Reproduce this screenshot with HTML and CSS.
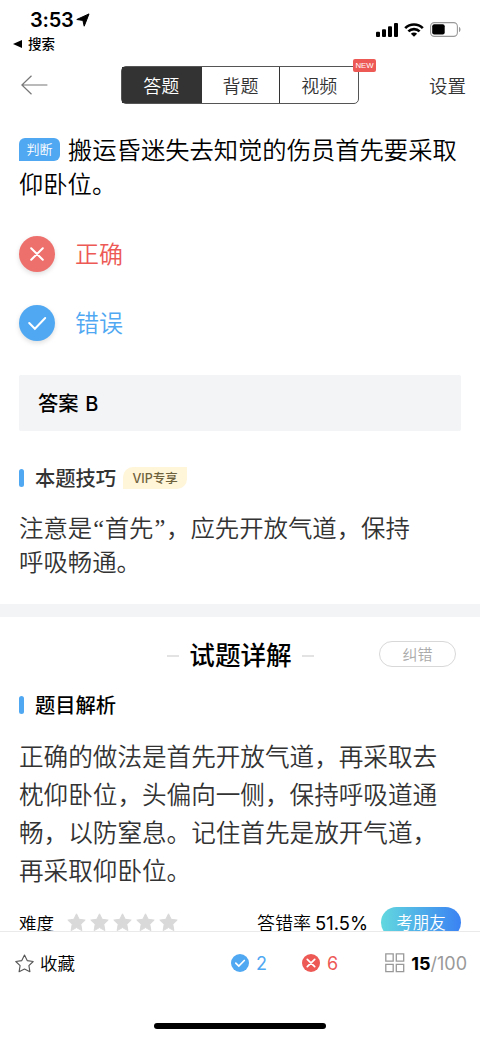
FILE: index.html
```html
<!DOCTYPE html>
<html lang="zh-CN">
<head>
<meta charset="utf-8">
<meta name="viewport" content="width=device-width, initial-scale=1">
<title>答题</title>
<link rel="stylesheet" href="styles.css">
</head>
<body>
<div class="app">
  <div class="status">
    <div class="status-left">
      <div class="clock"><span>3:53</span><svg class="location" width="14" height="14" viewBox="0 0 14 14"><path d="M13 .9 8.200 13.200 6.900 7.400.8 6.500z" stroke="#000" stroke-linejoin="round"/></svg></div>
      <div class="back-app"><svg width="9" height="8" viewBox="0 0 9 8"><path d="M0 4 9 0v8z"/></svg><span>搜索</span></div>
    </div>
    <div class="status-right">
      <svg width="22" height="14" viewBox="0 0 22 14"><rect y="8.8" width="4" height="5.2" rx="1"/><rect x="6" y="6.3" width="4" height="7.7" rx="1"/><rect x="12" y="3.2" width="4" height="10.8" rx="1"/><rect x="18" width="4" height="14" rx="1"/></svg>
      <svg width="20" height="14" viewBox="0 0 20 14"><path d="M1.2 5.1a12.6 12.6 0 0 1 17.6 0M4.4 8.4a8 8 0 0 1 11.2 0" fill="none" stroke="#000" stroke-width="2.7"/><path d="M10 13.8 6.9 10.8a4.4 4.4 0 0 1 6.2 0z"/></svg>
      <svg width="31" height="15" viewBox="0 0 31 15"><rect x=".6" y=".6" width="26.8" height="13.8" rx="3.8" fill="none" stroke="#999" stroke-width="1.1"/><rect x="2.2" y="2.3" width="12.5" height="10.2" rx="2"/><path d="M29 5c2 .6 2 4.400 0 5z" fill="#999"/></svg>
    </div>
  </div>

  <header class="nav">
    <svg class="back" width="28" height="20" viewBox="0 0 28 20"><path d="M10.500.8.9 10l9.600 9.200M.9 10h25.500"/></svg>
    <div class="tabs">
      <span class="tab active">答题</span><span class="tab">背题</span><span class="tab">视频</span>
      <span class="new">NEW</span>
    </div>
    <span class="settings">设置</span>
  </header>

  <main class="content">
    <section class="question">
      <span class="kind">判断</span>搬运昏迷失去知觉的伤员首先要采取<br>仰卧位。
    </section>
    <div class="option wrong">
      <span class="disc"><svg width="36" height="36" viewBox="0 0 36 36"><path d="m12.200 12.200 11.600 11.600m0-11.600L12.200 23.800"/></svg></span><span class="choice">正确</span>
    </div>
    <div class="option right">
      <span class="disc"><svg width="36" height="36" viewBox="0 0 36 36"><path d="m10.200 18 5.700 5.700L26.200 13"/></svg></span><span class="choice">错误</span>
    </div>
    <div class="answer">答案 <span>B</span></div>
    <h3 class="label tip-label"><i></i><span>本题技巧</span><span class="vip">VIP专享</span></h3>
    <p class="tip">注意是<span class="quote">“</span>首先<span class="quote">”</span>，应先开放气道，保持<br>呼吸畅通。</p>
    <div class="divider"></div>
    <div class="detail-head"><h2><i></i><span>试题详解</span><i></i></h2><button class="report">纠错</button></div>
    <h3 class="label dark"><i></i><span>题目解析</span></h3>
    <p class="analysis">正确的做法是首先开放气道，再采取去<br>枕仰卧位，头偏向一侧，保持呼吸道通<br>畅，以防窒息。记住首先是放开气道，<br>再采取仰卧位。</p>
    <div class="stats">
      <span class="difficulty">难度</span>
      <svg class="stars" width="112" height="20" viewBox="0 0 112 20">
        <defs><path id="star" d="m9.500.8 2.700 5.500 6 .8-4.400 4.200 1.100 6.300-5.400-3-5.400 3 1.100-6.300L.8 7.100l6-.8z" stroke="#d9d9d9" stroke-linejoin="round"/></defs>
        <use href="#star"/><use href="#star" x="23"/><use href="#star" x="46"/><use href="#star" x="69"/><use href="#star" x="92"/>
      </svg>
      <span class="rate">答错率 <b>51.5%</b></span>
      <span class="friends">考朋友</span>
    </div>
  </main>

  <footer class="bottom">
    <div class="toolbar">
      <svg class="fav-icon" width="19" height="19" viewBox="0 0 19 19"><path d="m9.500 1.100 2.700 5.500 6 .9-4.300 4.200 1 6-5.400-2.700-5.400 2.700 1-6L.8 7.500l6-.9z"/></svg>
      <span class="fav">收藏</span>
      <svg class="count-icon" width="18" height="18" viewBox="0 0 18 18"><circle cx="9" cy="9" r="9" fill="#50a8f2"/><path d="m4.800 9.100 3 3 5.500-5.600"/></svg>
      <span class="count blue">2</span>
      <svg class="count-icon" width="18" height="18" viewBox="0 0 18 18"><circle cx="9" cy="9" r="9" fill="#ed5a56"/><path d="m5.300 5.300 7.400 7.400m0-7.400-7.400 7.400"/></svg>
      <span class="count red">6</span>
      <svg class="grid-icon" width="20" height="20" viewBox="0 0 20 20"><path d="M.8.800h7.400v7.400H.8zM11.300.800h7.400v7.400h-7.400zM.8 11.300h7.400v7.400H.8zM11.300 11.300h7.400v7.400h-7.400z"/></svg>
      <span class="progress"><b>15</b>/100</span>
    </div>
    <div class="home"></div>
  </footer>
</div>
</body>
</html>
```

FILE: styles.css
```css
* { box-sizing: border-box; }
body { margin: 0; background: #fff; color: #000; font-family: "Noto Sans CJK SC", sans-serif; font-weight: 350; }
h2, h3, p { margin: 0; }
svg { display: block; flex: none; }
.app { width: 480px; height: 1039px; display: flex; flex-direction: column; overflow: hidden; white-space: nowrap; }
.status { height: 56px; flex: none; display: flex; justify-content: space-between; padding: 9px 19px 0 13px; }
.clock { display: flex; align-items: center; gap: 4px; height: 23px; padding-left: 17px; font: 600 20px/23px Inter, sans-serif; }
.clock span { width: 42px; letter-spacing: -.2px; }
.location { margin-bottom: 2px; }
.back-app { display: flex; align-items: center; gap: 6px; height: 23px; font-size: 13.500px; font-weight: 500; line-height: 23px; }
.status-right { display: flex; align-items: center; height: 15px; margin-top: 13px; gap: 6px; }
.nav { height: 55px; flex: none; display: flex; align-items: center; padding: 2px 14px 0 21px; }
.back { fill: none; stroke: #777; stroke-width: 1.200; }
.tabs { position: relative; display: flex; width: 238px; height: 38px; margin-left: 72px; border: 1.500px solid #555; border-radius: 5px; }
.tab { width: 79px; font-size: 18px; line-height: 36px; text-align: center; color: #333; }
.tab + .tab { border-left: 1px solid #333; }
.tab.active { width: 79px; background: #333; color: #fff; }
.new { position: absolute; right: -18px; top: -8px; width: 23px; height: 13px; border-radius: 2px; background: #ed5a56; color: #fff; font: 7.800px/13.500px "Liberation Sans", sans-serif; text-align: center; }
.settings { margin-left: auto; font-size: 18.500px; color: #333; }
.content { height: 820px; flex: none; overflow: hidden; }
.question { height: 108px; padding: 21px 19px 0; font-size: 24.300px; line-height: 34px; }
.kind { display: inline-block; width: 41px; height: 23px; margin-right: 8px; border-radius: 6px 6px 6px 0; background: #50a8f2; color: #fff; font-size: 13px; line-height: 22px; text-align: center; vertical-align: 5px; }
.option { height: 69px; display: flex; align-items: center; gap: 20px; padding-left: 19px; font-size: 24px; }
.choice { padding-bottom: 2px; }
.wrong { color: #ed5a56; }
.right { color: #50a8f2; }
.disc { border-radius: 50%; background: currentColor; box-shadow: 0 2px 5px #0002; }
.wrong .disc { background: #ee706d; }
.disc path { fill: none; stroke: #fff; stroke-width: 2; stroke-linecap: round; }
.answer { height: 56px; margin: 18px 19px 0; padding-left: 19px; border-radius: 2px; background: #f3f4f6; font-size: 20.300px; font-weight: 500; line-height: 54px; }
.answer span { margin-left: 2px; font: 500 20px Inter, sans-serif; }
.label { display: flex; align-items: center; height: 30px; padding-left: 19px; color: #333; font-size: 20.300px; font-weight: 500; line-height: 28px; }
.label i { width: 5px; height: 18px; margin-right: 11px; border-radius: 2.500px; background: #50a8f2; }
.label i + span { padding-bottom: 2px; }
.label.dark { margin-top: 13px; color: #000; }
.tip-label { margin-top: 32px; }
.vip { width: 64px; height: 22px; margin-left: 7px; border-radius: 10px 0 10px 0; background: #fff5d9; color: #6e623d; font: 500 12.500px/23px Inter, "Noto Sans CJK SC", sans-serif; text-align: center; }
.tip { height: 111px; padding: 17px 19px 0; color: #333; font-size: 24.400px; line-height: 34px; }
.quote { display: inline-block; width: 12.500px; padding-left: 1px; font-family: "Liberation Serif", serif; line-height: 24px; }
.divider { height: 13px; background: #f3f4f6; }
.detail-head { display: grid; grid-template-columns: 1fr 148px 1fr; align-items: center; height: 60px; padding: 14px 24px 0 25px; }
.detail-head h2 { grid-column: 2; display: flex; align-items: center; gap: 10px; font-size: 25.600px; font-weight: 500; line-height: 43px; }
.detail-head h2 span { padding-bottom: 2px; }
.detail-head h2 i { width: 13px; height: 2px; margin-top: 4px; background: #e3e3e3; }
.report { justify-self: end; width: 77px; height: 26px; padding: 0; border: 1px solid #d8d8d8; border-radius: 13px; background: #fff; color: #aaa; font: 350 15px/22px "Noto Sans CJK SC", sans-serif; }
.analysis { padding: 16px 19px 0; color: #333; font-size: 24.600px; line-height: 38px; }
.stats { display: flex; align-items: center; height: 40px; padding: 0 19px; margin-top: 14px; font-size: 17.500px; }
.stars { margin: 2px 0 0 13px; fill: #d9d9d9; }
.rate { margin-left: auto; font-size: 18px; }
.rate b { font: 18.400px Inter, sans-serif; }
.friends { width: 80px; height: 31px; margin-left: 13px; border-radius: 16px; background: linear-gradient(90deg, #62d8df, #3a82f3); color: #fff; font-size: 16.500px; line-height: 31px; text-align: center; }
.bottom { height: 108px; flex: none; display: flex; flex-direction: column; align-items: center; border-top: 1px solid #eaeaea; background: #fff; }
.toolbar { display: flex; align-items: center; width: 100%; height: 62px; padding: 0 13px 0 15px; }
.fav-icon { fill: none; stroke: #555; stroke-width: 1.100; stroke-linejoin: round; }
.fav { width: 197px; flex: none; padding: 0 0 2px 6px; font-size: 17.500px; }
.count-icon path { fill: none; stroke: #fff; stroke-width: 1.700; stroke-linecap: round; }
.count { width: 53px; flex: none; padding-left: 7px; font: 18px Inter, sans-serif; }
.count.blue { color: #50a8f2; }
.count.red { width: 65px; color: #ed5a56; }
.grid-icon { fill: none; stroke: #999; stroke-width: 1.300; }
.progress { margin-left: auto; color: #999; font: 18px Inter, sans-serif; }
.progress b { color: #000; font-weight: 700; }
.home { width: 172px; height: 6px; margin-top: 29px; border-radius: 3px; background: #000; }
```
